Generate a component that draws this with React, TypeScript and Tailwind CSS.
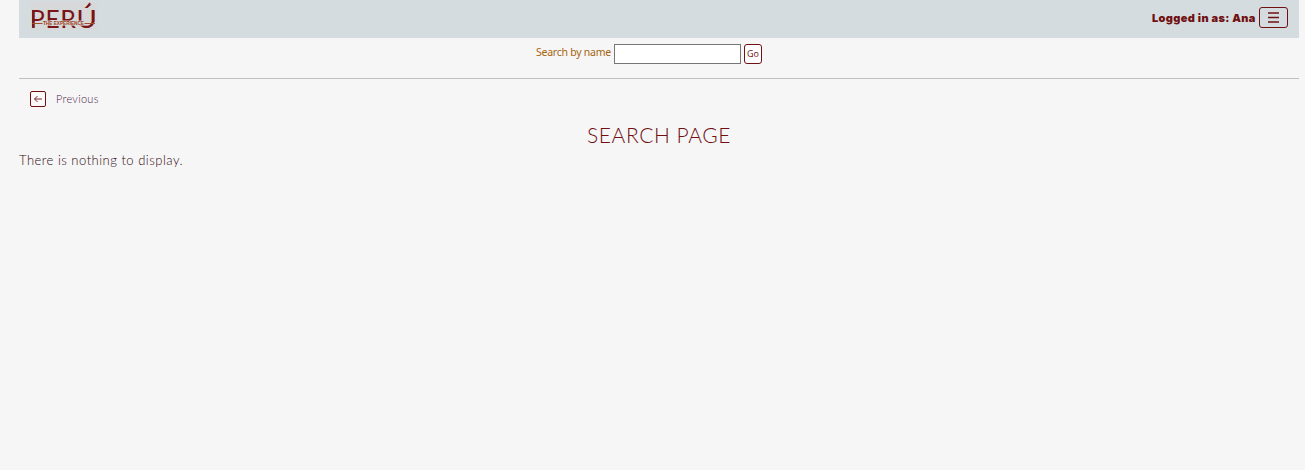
import React from "react";

function Logo() {
  return (
    <svg width="70" height="34" viewBox="0 0 70 34" className="overflow-visible" role="img" aria-label="Perú, the experience">
      <rect x="2" y="2" width="66" height="28" fill="#d6d8d9" />
      <text y="27.6" fontFamily="Lato, sans-serif" fontSize="24.5" fill="#7b1517">
        <tspan x="1">P</tspan>
        <tspan x="16.5">E</tspan>
        <tspan x="31.5">R</tspan>
        <tspan x="47.5" textLength="20" lengthAdjust="spacingAndGlyphs">Ú</tspan>
      </text>
      <path d="M4.2 10v17.6M34.8 10v17.6M64.4 10v12" fill="none" stroke="#7b1517" strokeWidth="2.2" />
      <path d="M58 7.5l3-4.5" stroke="#7b1517" strokeWidth="1.6" />
      <rect x="13.5" y="20.6" width="42" height="5" fill="#d6d8d9" />
      <path d="M3 23.5h10.5M55.5 23.5H66" stroke="#a0502c" strokeWidth="1" />
      <text x="14" y="25.3" fontFamily="Liberation Sans, sans-serif" fontWeight="700" fontSize="4.9" fill="#9c4320" textLength="41" lengthAdjust="spacingAndGlyphs">
        THE EXPERIENCE
      </text>
    </svg>
  );
}

export default function App() {
  return (
    <div className="min-h-screen bg-[#f6f6f6] pr-[6px] pl-[19px] font-['Lato','Open_Sans',sans-serif] text-[#701012]">
      <header className="flex h-[38px] items-start justify-between bg-[#d4dcdf] pr-[11px] pl-[10px]">
        <Logo />
        <div className="flex items-start pt-[7px]">
          <span className="mr-[3px] w-[105px] pt-[3px] pl-px font-['Inter',sans-serif] text-[11px] leading-4 font-black tracking-[0.36px] whitespace-nowrap">
            Logged in as: Ana
          </span>
          <button aria-label="Menu" className="flex h-[21px] w-[29px] items-center justify-center rounded-[3px] border border-[#701012]">
            <svg width="11" height="11" viewBox="0 0 11 11" stroke="#701012" strokeWidth="1.3">
              <path d="M0 1h11M0 5.5h11M0 10h11" />
            </svg>
          </button>
        </div>
      </header>

      <form className="flex h-[41px] items-start border-b border-[#bfbfbf] pt-[6px] pl-[517px]" onSubmit={(e) => e.preventDefault()}>
        <label htmlFor="name" className="w-[78px] font-['Noto_Sans',sans-serif] text-[10.5px] leading-4 tracking-[-0.25px] whitespace-nowrap text-[#a8640f]">
          Search by name
        </label>
        <input id="name" className="h-[20px] w-[127px] border border-[#767676] bg-white px-1 text-xs outline-none" />
        <button className="ml-[3px] flex h-[20px] w-[18px] items-center justify-center rounded-[3px] border border-[#701012] bg-white font-['Open_Sans',sans-serif] text-[9px]">
          Go
        </button>
      </form>

      <nav className="flex h-[40px] items-center pl-[11px]">
        <svg width="16" height="16" viewBox="0 0 16 16" fill="none" stroke="#701012">
          <rect x="0.5" y="0.5" width="15" height="15" rx="1.5" fill="#fafafa" />
          <path d="M12 8H4.5M7.5 5l-3 3 3 3" strokeWidth="0.9" />
        </svg>
        <a href="#" className="ml-[10px] text-[11px] leading-4 font-light tracking-[0.3px] text-[#50204c]">
          Previous
        </a>
      </nav>

      <h1 className="flex h-[32px] items-center justify-center text-[21px] font-light tracking-[0.55px] whitespace-nowrap">SEARCH PAGE</h1>
      <p className="h-[18px] text-[13px] leading-[18px] font-light tracking-[0.5px] whitespace-nowrap text-[#300810]">There is nothing to display.</p>
    </div>
  );
}
